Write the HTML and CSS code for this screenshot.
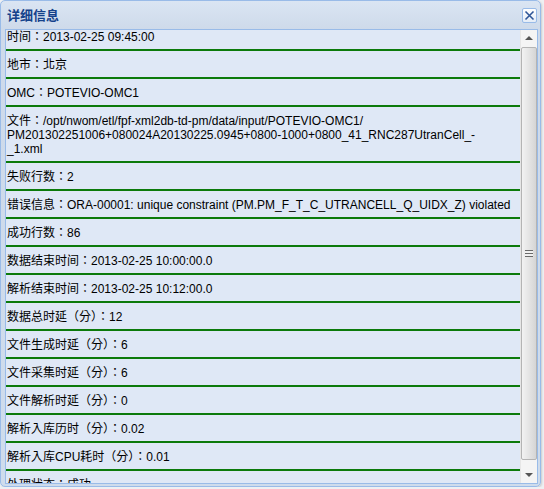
FILE: index.html
```html
<!DOCTYPE html>
<html>
<head>
<meta charset="utf-8">
<link rel="stylesheet" href="styles.css">
</head>
<body>
<div class="window">
  <div class="titlebar">
    <span class="title">详细信息</span>
    <span class="close"><svg width="11" height="11" viewBox="0 0 11 11"><path d="M1.5 1.5 L9.5 9.5 M9.5 1.5 L1.5 9.5" stroke="#2f5597" stroke-width="1.6" fill="none"/></svg></span>
  </div>
  <div class="panel">
    <div class="list">
      <div class="row first">时间：2013-02-25 09:45:00</div>
      <div class="row">地市：北京</div>
      <div class="row">OMC：POTEVIO-OMC1</div>
      <div class="row">文件：/opt/nwom/etl/fpf-xml2db-td-pm/data/input/POTEVIO-OMC1/<br>PM201302251006+080024A20130225.0945+0800-1000+0800_41_RNC287UtranCell_-<br>_1.xml</div>
      <div class="row">失败行数：2</div>
      <div class="row">错误信息：ORA-00001: unique constraint (PM.PM_F_T_C_UTRANCELL_Q_UIDX_Z) violated</div>
      <div class="row">成功行数：86</div>
      <div class="row">数据结束时间：2013-02-25 10:00:00.0</div>
      <div class="row">解析结束时间：2013-02-25 10:12:00.0</div>
      <div class="row">数据总时延（分）：12</div>
      <div class="row">文件生成时延（分）：6</div>
      <div class="row">文件采集时延（分）：6</div>
      <div class="row">文件解析时延（分）：0</div>
      <div class="row">解析入库历时（分）：0.02</div>
      <div class="row">解析入库CPU耗时（分）：0.01</div>
      <div class="row">处理状态：成功</div>
    </div>
    <div class="scrollbar">
      <div class="arrow up"></div>
      <div class="track">
        <div class="thumb"><span class="grip"></span></div>
      </div>
      <div class="arrow down"></div>
    </div>
  </div>
</div>
</body>
</html>
```
FILE: styles.css
```css
html, body {
  margin: 0;
  padding: 0;
  background: #eef0f3;
}
.window {
  box-sizing: border-box;
  width: 541px;
  height: 487px;
  border: 1px solid #99bbe8;
  border-radius: 5px;
  background: linear-gradient(#dae5f3, #cedaea 28px, #cfdcec);
  padding: 0 2px 2px 4px;
  display: flex;
  flex-direction: column;
  box-shadow: 1px 1px 2px rgba(0,0,0,0.15);
}
.titlebar {
  height: 28px;
  display: flex;
  align-items: center;
  justify-content: space-between;
  padding-left: 2px;
  padding-right: 1px;
}
.title {
  font-family: "Noto Sans CJK SC", sans-serif;
  font-weight: bold;
  font-size: 13px;
  color: #15428b;
  line-height: 14px;
  margin-top: -1px;
}
.close {
  box-sizing: border-box;
  width: 15px;
  height: 15px;
  border: 1px solid #99bbe8;
  border-radius: 2px;
  background: linear-gradient(#ffffff, #e4ecf7);
  display: flex;
  align-items: center;
  justify-content: center;
  margin-top: 1px;
}
.panel {
  flex: 1;
  border: 1px solid #99bbe8;
  background: #dfe8f6;
  display: flex;
  overflow: hidden;
}
.list {
  flex: 1;
  overflow: hidden;
  font-family: "Liberation Sans", "Noto Sans CJK TC", sans-serif;
  font-size: 12px;
  color: #000;
}
.row {
  line-height: 14px;
  padding: 7px 0 5px 1px;
  border-bottom: 2px solid #0b7a0b;
  white-space: nowrap;
}
.row.first {
  padding-top: 0;
}
.scrollbar {
  width: 16px;
  display: flex;
  flex-direction: column;
  background: #f4f4f4;
  border-left: 1px solid #e6e6e6;
}
.arrow {
  height: 17px;
  position: relative;
}
.arrow::after {
  content: "";
  position: absolute;
  left: 4px;
  width: 0;
  height: 0;
  border-left: 4px solid transparent;
  border-right: 4px solid transparent;
}
.arrow.up::after {
  top: 6px;
  border-bottom: 4px solid #555;
}
.arrow.down::after {
  top: 7px;
  border-top: 4px solid #555;
}
.track {
  flex: 1;
  display: flex;
  flex-direction: column;
  padding: 0 0 6px 0;
}
.thumb {
  flex: 1;
  box-sizing: border-box;
  border: 1px solid #b4b4b4;
  border-radius: 2px;
  background: linear-gradient(90deg, #f2f2f2, #e4e4e4 50%, #d5d5d5);
  display: flex;
  align-items: center;
  justify-content: center;
}
.grip {
  width: 8px;
  height: 7px;
  background: repeating-linear-gradient(#6a6a6a 0, #6a6a6a 1px, #f0f0f0 1px, #f0f0f0 3px);
}
```
